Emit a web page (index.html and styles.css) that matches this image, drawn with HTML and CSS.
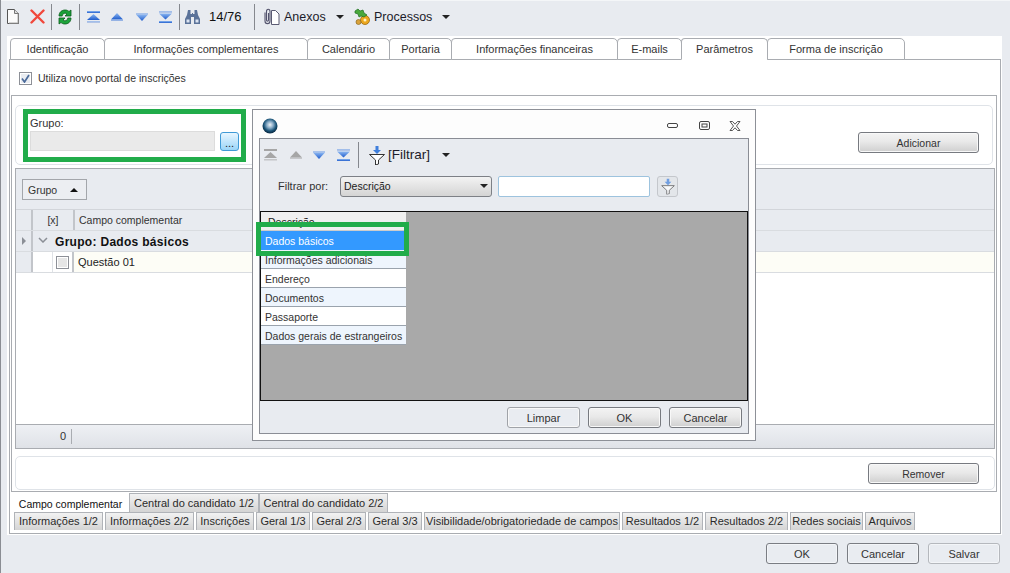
FILE: index.html
```html
<!DOCTYPE html>
<html lang="pt">
<head>
<meta charset="utf-8">
<title>Parâmetros</title>
<link rel="stylesheet" href="styles.css">
</head>
<body>
<svg class="defs" width="0" height="0" aria-hidden="true">
  <defs>
    <linearGradient id="blue" x1="0" y1="0" x2="0" y2="1"><stop offset="0" stop-color="#8db8f2"/><stop offset="1" stop-color="#1f5ccc"/></linearGradient>
    <radialGradient id="orb" cx=".5" cy=".42" r=".55"><stop offset="0" stop-color="#f0f4f8"/><stop offset=".4" stop-color="#86aac6"/><stop offset=".75" stop-color="#1a5478"/><stop offset="1" stop-color="#0b2c46"/></radialGradient>
    <symbol id="nav-first" viewBox="0 0 13 12"><rect x="0" y="0" width="13" height="2"/><path d="M6.500 3 13 9H0z"/><rect x="0" y="10" width="13" height="1.500" opacity=".55"/></symbol>
    <symbol id="nav-up" viewBox="0 0 12 8"><path d="M6 0 12 6.500H0z"/><rect y="6.500" width="12" height="1.500" opacity=".5"/></symbol>
    <symbol id="nav-down" viewBox="0 0 12 8"><rect width="12" height="1.500" opacity=".5"/><path d="M0 1.500H12L6 8z"/></symbol>
    <symbol id="nav-last" viewBox="0 0 13 12"><rect width="13" height="1.500" opacity=".55"/><path d="M0 2.500H13L6.500 8.500z"/><rect y="10" width="13" height="2"/></symbol>
    <symbol id="funnel" viewBox="0 0 16 19"><path d="M6.500 0h3v4h2.500L8 8 4 4h2.500z" fill="#3f7fdc"/><path d="M.5 8.500h15L9.500 14v4l-3 1v-5z" fill="#fff" stroke="#333"/></symbol>
  </defs>
</svg>
<div class="app">
  <header class="toolbar">
    <svg class="ic ic-new" width="12" height="15" viewBox="0 0 12 15"><path d="M.5.5h7l4 4v10H.5z" fill="#fbfbfb" stroke="#555"/><path d="M7.500.5v4h4" fill="#ddd" stroke="#777"/><path d="M11 5v9H2" fill="none" stroke="#aaa"/></svg>
    <svg class="ic ic-del" width="15" height="15" viewBox="0 0 15 15"><path d="M1.500 1.500 13.500 13.500M13.500 1.500 1.500 13.500" stroke="#f0483c" stroke-width="2.400" stroke-linecap="round"/></svg>
    <span class="sep sep-a"></span>
    <svg class="ic ic-ref" width="14" height="16" viewBox="0 0 14 16"><path d="M1 7C1 3 4 1 7 1c2 0 3 .6 4 1.500L13 1v6H7l2-2C8 4 6.500 4 5.500 4.700 4.500 5.400 4.300 6.400 4.300 7z" fill="#18a038" stroke="#0b5c1c" stroke-width=".8"/><path d="M13 9c0 4-3 6-6 6-2 0-3-.6-4-1.500L1 15V9h6l-2 2c1 1 2.500 1 3.500.3 1-.7 1.200-1.700 1.200-2.300z" fill="#1ea53c" stroke="#0b5c1c" stroke-width=".8"/></svg>
    <span class="sep sep-b"></span>
    <svg class="nav nav-w ic-first" width="13" height="12"><use href="#nav-first"/></svg>
    <svg class="nav nav-w ic-up" width="12" height="8"><use href="#nav-up"/></svg>
    <svg class="nav nav-w ic-down" width="12" height="8"><use href="#nav-down"/></svg>
    <svg class="nav nav-w ic-last" width="13" height="12"><use href="#nav-last"/></svg>
    <span class="sep sep-c"></span>
    <svg class="ic ic-bin" width="15" height="15" viewBox="0 0 15 15"><path d="M3 1h2.500v4H7v-1h1v1h1.500V1H12l1 5 2 4v5H9V8H6v7H0v-5l2-4z" fill="#5a7299"/><path d="M1.500 10.500h3v3h-3zM10.500 10.500h3v3h-3z" fill="#dbe4f2"/></svg>
    <span class="count">14/76</span>
    <span class="sep sep-d"></span>
    <svg class="ic ic-clip" width="17" height="18" viewBox="0 0 17 18"><path d="M8.500 2.500h4l3.500 3.500v10.500H8.500z" fill="#fff" stroke="#5a5a72"/><path d="M2 4.500V13c0 3.500 5 3.500 5 0V3.500C7 .5 3.500.5 3.500 3.500V12c0 1.500 2 1.500 2 0V5" fill="none" stroke="#54546e" stroke-width="1.100"/></svg>
    <span class="tool-label lab-anexos">Anexos</span>
    <span class="caret caret-anexos"></span>
    <svg class="ic ic-proc" width="17" height="18" viewBox="0 0 17 18"><circle cx="11" cy="12" r="4.500" fill="#eda81e" stroke="#9c6a10" stroke-width=".8"/><circle cx="11" cy="12" r="1.500" fill="#fff2c0"/><path d="M1 3l3-2 2 2 3-1 1 3 3 2-3 2-3-1-2 1-1-3-3-1z" fill="#49a83c" stroke="#1f6e22" stroke-width=".7"/><circle cx="4.500" cy="14" r="2.500" fill="#d9a23a" stroke="#8c6a20" stroke-width=".7"/></svg>
    <span class="tool-label lab-proc">Processos</span>
    <span class="caret caret-proc"></span>
  </header>

  <main class="sheet">
    <nav class="top-tabs">
      <span class="top-tab">Identificação</span>
      <span class="top-tab">Informações complementares</span>
      <span class="top-tab">Calendário</span>
      <span class="top-tab">Portaria</span>
      <span class="top-tab">Informações financeiras</span>
      <span class="top-tab">E-mails</span>
      <span class="top-tab top-tab-on">Parâmetros</span>
      <span class="top-tab">Forma de inscrição</span>
    </nav>
    <section class="frame">
      <label class="portal-row"><span class="check check-on"><svg width="9" height="9" viewBox="0 0 9 9"><path d="M1 4.500 3.500 8 8 1" fill="none" stroke="#4a6a9a" stroke-width="1.700"/></svg></span>Utiliza novo portal de inscrições</label>
      <div class="inner">
        <div class="box box-group">
          <div class="field">
            <span class="field-label">Grupo:</span>
            <div class="field-row">
              <span class="field-input"></span>
              <span class="dots">...</span>
            </div>
          </div>
          <button class="btn btn-add">Adicionar</button>
        </div>
        <div class="grid">
          <div class="group-panel"><span class="group-chip">Grupo<i class="caret-up"></i></span></div>
          <div class="grid-row grid-head">
            <span class="cell c-ind"></span>
            <span class="cell c-x">[x]</span>
            <span class="cell c-main">Campo complementar</span>
          </div>
          <div class="grid-row grid-group">
            <span class="cell c-ind"><i class="tri-right"></i></span>
            <span class="chev"><svg width="10" height="6" viewBox="0 0 10 6"><path d="M1 1 5 5 9 1" fill="none" stroke="#8b8f96" stroke-width="1.500"/></svg></span>
            <strong>Grupo: Dados básicos</strong>
          </div>
          <div class="grid-row grid-item">
            <span class="cell c-ind"></span>
            <span class="c-pad"></span>
            <span class="c-check"><span class="check check-off"></span></span>
            <span class="cell c-main c-value">Questão 01</span>
          </div>
          <div class="grid-space"></div>
          <div class="grid-foot"><span class="foot-count">0</span></div>
        </div>
        <div class="box box-remove"><button class="btn btn-rem">Remover</button></div>
      </div>
      <div class="low-tabs low-one">
        <span class="low-tab low-on">Campo complementar</span>
        <span class="low-tab">Central do candidato 1/2</span>
        <span class="low-tab">Central do candidato 2/2</span>
      </div>
      <div class="low-tabs low-two">
        <span class="low-tab">Informações 1/2</span>
        <span class="low-tab">Informações 2/2</span>
        <span class="low-tab">Inscrições</span>
        <span class="low-tab">Geral 1/3</span>
        <span class="low-tab">Geral 2/3</span>
        <span class="low-tab">Geral 3/3</span>
        <span class="low-tab">Visibilidade/obrigatoriedade de campos</span>
        <span class="low-tab">Resultados 1/2</span>
        <span class="low-tab">Resultados 2/2</span>
        <span class="low-tab">Redes sociais</span>
        <span class="low-tab">Arquivos</span>
      </div>
    </section>
  </main>

  <footer class="actions">
    <button class="btn btn-flat">OK</button>
    <button class="btn btn-flat">Cancelar</button>
    <button class="btn btn-flat btn-off">Salvar</button>
  </footer>
</div>

<div class="mark mark-group"></div>

<aside class="dialog">
  <div class="dialog-title">
    <svg class="orb" width="16" height="16" viewBox="0 0 16 16"><circle cx="8" cy="8" r="7.500" fill="url(#orb)"/></svg>
    <span class="win-btns">
      <svg width="13" height="6" viewBox="0 0 13 6"><rect x=".5" y=".5" width="10" height="4" rx="1.500" fill="none" stroke="#444"/></svg>
      <svg width="11" height="10" viewBox="0 0 11 10"><rect x=".5" y=".5" width="10" height="8" rx="1.500" fill="none" stroke="#444"/><rect x="3" y="3" width="5" height="3" fill="none" stroke="#444"/></svg>
      <svg width="12" height="10" viewBox="0 0 12 10"><path d="M1 .5h2.500L6 3.200 8.500.5H11L7.500 5 11 9.500H8.500L6 6.800 3.500 9.500H1L4.500 5z" fill="#fff" stroke="#444" stroke-width=".9"/></svg>
    </span>
  </div>
  <div class="dialog-body">
    <div class="dialog-tools">
      <svg class="nav nav-g dt-first" width="13" height="12"><use href="#nav-first"/></svg>
      <svg class="nav nav-g dt-up" width="12" height="8"><use href="#nav-up"/></svg>
      <svg class="nav nav-w dt-down" width="12" height="8"><use href="#nav-down"/></svg>
      <svg class="nav nav-w dt-last" width="13" height="12"><use href="#nav-last"/></svg>
      <span class="sep dt-sep"></span>
      <svg class="dt-funnel" width="16" height="19"><use href="#funnel"/></svg>
      <span class="tool-label dt-label">[Filtrar]</span>
      <span class="caret dt-caret"></span>
    </div>
    <div class="filter-row">
      <span class="filter-label">Filtrar por:</span>
      <span class="select">Descrição<i class="caret"></i></span>
      <span class="filter-input"></span>
      <span class="filter-btn"><svg width="16" height="19"><use href="#funnel"/></svg></span>
    </div>
    <div class="list-area">
      <div class="list">
        <div class="list-head">Descrição</div>
        <div class="list-row list-sel">Dados básicos</div>
        <div class="list-row list-alt">Informações adicionais</div>
        <div class="list-row">Endereço</div>
        <div class="list-row list-alt">Documentos</div>
        <div class="list-row">Passaporte</div>
        <div class="list-row list-alt">Dados gerais de estrangeiros</div>
        <div class="mark mark-row"></div>
      </div>
    </div>
    <div class="dialog-actions">
      <button class="btn btn-light">Limpar</button>
      <button class="btn">OK</button>
      <button class="btn">Cancelar</button>
    </div>
  </div>
</aside>
</body>
</html>
```

FILE: styles.css
```css
* { box-sizing: border-box; }
html, body { margin: 0; padding: 0; }
body {
  position: relative;
  width: 1010px;
  height: 573px;
  overflow: hidden;
  background: #e8ebf0;
  color: #2a2a2a;
  font: 10.500px/14px "Liberation Sans", Arial, sans-serif;
}
.defs { position: absolute; }
.app { display: flex; flex-direction: column; height: 573px; border-left: 1px solid #8a8d93; }

/* main toolbar */
.toolbar { display: flex; align-items: center; height: 36px; flex: none; border-top: 1px solid #f4f6f8; padding-bottom: 4px; }
.ic, .nav { flex: none; display: block; }
.nav-w { fill: url(#blue); }
.nav-g { fill: #a6a6a6; }
.ic-new { margin-left: 6px; }
.ic-del { margin-left: 11px; }
.sep { flex: none; width: 1px; height: 26px; background: #85888e; }
.sep-a { margin-left: 6px; }
.ic-ref { margin-left: 6px; }
.sep-b { margin-left: 7px; }
.ic-first { margin-left: 7px; }
.ic-up { margin-left: 11px; }
.ic-down { margin-left: 13px; }
.ic-last { margin-left: 11px; }
.sep-c { margin-left: 7px; }
.ic-bin { margin-left: 5px; }
.count { margin-left: 9px; width: 33px; font-size: 13px; color: #111; }
.sep-d { margin-left: 12px; }
.ic-clip { margin-left: 8px; }
.tool-label { font-size: 12.500px; color: #1c1c2a; }
.lab-anexos { margin-left: 4px; width: 42px; }
.caret { flex: none; width: 0; height: 0; border: 4px solid transparent; border-top: 4px solid #222; border-bottom: 0; }
.caret-anexos { margin-left: 10px; }
.ic-proc { margin-left: 10px; }
.lab-proc { margin-left: 3px; width: 58px; }
.caret-proc { margin-left: 10px; }

/* sheet */
.sheet { flex: none; height: 499px; margin-left: 6px; width: 995px; background: #fff; padding: 2px 0 0 2px; display: flex; flex-direction: column; }
.top-tabs { display: grid; grid-template-columns: 94px 203px 82px 62px 166px 64px 86px 137px; height: 22px; flex: none; padding-left: 1px; position: relative; z-index: 1; }
.top-tab { display: flex; align-items: center; justify-content: center; margin-right: -1px; background: #fff; color: #333; font-size: 11px; border: 1px solid #a9acb1; border-radius: 4px 5px 0 0; }
.top-tab-on { border-bottom-color: #fff; }
.frame { flex: none; width: 992px; height: 475px; border: 1px solid #a9acb1; padding: 1px; display: flex; flex-direction: column; margin-top: -1px; background: #fff; }
.portal-row { display: flex; align-items: center; height: 34px; padding: 0 0 0 8px; gap: 6px; color: #333; flex: none; }
.check { flex: none; display: flex; align-items: center; justify-content: center; width: 13px; height: 13px; border: 1px solid #8d9097; background: #e9ecf1; box-shadow: inset 0 0 0 1px #fff; }
.check-off { background: #e6e6e6; }
.inner { flex: none; width: 986px; height: 397px; border: 1px solid #a9acb1; padding: 9px 3px 0 3px; display: flex; flex-direction: column; }

.box { border: 1px solid #dfe3e8; border-radius: 5px; background: #fff; display: flex; }
.box-group { height: 60px; flex: none; justify-content: space-between; align-items: flex-start; padding: 9px 13px 0 14px; }
.field-label { display: block; height: 15px; color: #333; margin-top: 1px; font-size: 11px; }
.field-row { display: flex; align-items: flex-start; gap: 5px; }
.field-input { display: block; width: 185px; height: 20px; background: #eaeaea; border: 1px solid #dcdcdc; }
.dots { display: flex; align-items: flex-end; justify-content: center; width: 19px; height: 19px; margin-top: 1px; border: 1px solid #3f9ad6; border-radius: 3px; background: linear-gradient(#e8f6ff, #9bd5f8); font-size: 11px; line-height: 13px; color: #222; }
.btn { display: block; flex: none; width: 73px; height: 21px; padding: 0; font: 11px/14px "Liberation Sans", Arial, sans-serif; color: #333; text-align: center; border: 1px solid #777a80; border-radius: 3px; background: linear-gradient(#f3f3f3 0%, #e9e9e9 45%, #cfcfcf 100%); box-shadow: inset 0 0 0 1px #f8f8f8; }
.btn-add { width: 121px; margin-top: 17px; font-size: 10.500px; }

.grid { flex: none; height: 281px; margin-top: 3px; width: 980px; border: 1px solid #a9acb1; display: flex; flex-direction: column; }
.group-panel { height: 41px; flex: none; background: #e8ebf0; padding: 10px 0 0 6px; border-bottom: 1px solid #d2d5da; }
.group-chip { display: flex; align-items: center; justify-content: space-between; width: 65px; height: 21px; padding: 0 8px 0 5px; background: #eceef2; border: 1px solid #a3a6ab; color: #333; }
.caret-up { width: 0; height: 0; border: 4px solid transparent; border-bottom: 4px solid #111; border-top: 0; }
.grid-row { display: flex; align-items: stretch; height: 21px; flex: none; border-bottom: 1px solid #d9dce0; }
.cell { display: flex; align-items: center; }
.c-ind { width: 17px; flex: none; background: #e8ebf0; border-right: 2px solid #c2c5ca; justify-content: center; }
.c-x { width: 42px; justify-content: center; border-right: 2px solid #c2c5ca; }
.c-main { padding-left: 4px; flex: 1; }
.c-value { font-size: 11px; }
.grid-head { background: #e8ebf0; color: #333; }
.grid-group { background: #e8ebf0; align-items: center; color: #111; }
.grid-group .c-ind { align-self: stretch; }
.grid-group strong { margin-left: 7px; font-size: 12px; letter-spacing: .3px; padding-top: 1px; }
.chev { display: block; margin-left: 5px; height: 14px; line-height: 11px; }
.tri-right { width: 0; height: 0; border: 4px solid transparent; border-left: 4px solid #8b8f96; border-right: 0; }
.grid-item { background: #fdfdf6; color: #222; }
.c-pad { width: 20px; flex: none; background: #fff; border-right: 1px solid #dfe2e6; }
.c-check { width: 21px; flex: none; display: flex; align-items: center; justify-content: center; border-right: 2px solid #c2c5ca; background: #fff; }
.grid-space { flex: 1; background: #fff; border-bottom: 1px solid #a9acb1; }
.grid-foot { height: 23px; flex: none; display: flex; align-items: center; background: linear-gradient(#eef0f4, #dfe2e7); }
.foot-count { width: 56px; padding: 0 5px 0 0; height: 15px; text-align: right; border-right: 1px solid #a9acb1; color: #333; font-size: 11px; }
.box-remove { height: 34px; flex: none; margin-top: 7px; width: 980px; justify-content: flex-end; padding: 6px 15px 0 0; }
.btn-rem { width: 111px; font-size: 10.500px; }

/* lower tabs */
.low-tabs { display: grid; flex: none; }
.low-one { height: 20px; grid-template-columns: 117px 130px 129px; margin: 0 0 0 1px; }
.low-two { height: 18px; margin-left: 3px; grid-template-columns: 91px 91px 60px 56px 56px 56px 198px 83px 85px 75px 52px; }
.low-tab { display: flex; align-items: center; justify-content: center; color: #2a2a2a; font-size: 11px; background: linear-gradient(#f2f2f2, #d4d4d4); border: 1px solid #b0b3b8; border-bottom: 0; white-space: nowrap; }
.low-two .low-tab { padding-bottom: 2px; margin-right: 2px; }
.low-one .low-tab { margin-top: 1px; }
.low-one .low-on { margin-top: 0; padding-top: 3px; font-size: 10.500px; background: #fff; border: 0; color: #111; }

/* footer */
.actions { flex: none; display: flex; justify-content: flex-end; gap: 9px; padding: 8px 10px 0 0; }
.actions .btn { width: 72px; }
.btn-flat { background: #e9ecf1; border-color: #7a7d83; box-shadow: inset 0 0 0 1px #f3f5f8; }
.btn-off { border-color: #b5b8bd; }
.btn-light { background: #e9ecf1; border-color: #a0a3a8; }

/* overlay markers */
.mark { position: absolute; border: 5px solid #21ac4a; pointer-events: none; }
.mark-group { left: 23px; top: 109px; width: 223px; height: 53px; }
.mark-row { left: -5px; top: 10px; width: 153px; height: 34px; }

/* dialog */
.dialog { position: absolute; left: 252px; top: 109px; width: 504px; height: 332px; background: #fdfdfd; border: 1px solid #8d9097; padding: 0 6px 6px 6px; display: flex; flex-direction: column; }
.dialog-title { height: 28px; flex: none; display: flex; align-items: center; justify-content: space-between; padding: 4px 8px 0 3px; }
.orb { display: block; }
.win-btns { display: flex; align-items: center; gap: 19px; }
.dialog-body { flex: 1; background: #e8ebf0; border: 1px solid #8a8d95; display: flex; flex-direction: column; }
.dialog-tools { display: flex; align-items: center; height: 31px; flex: none; padding-top: 1px; }
.dt-first { margin-left: 4px; }
.dt-up { margin-left: 13px; }
.dt-down { margin-left: 11px; }
.dt-last { margin-left: 12px; }
.dt-sep { margin-left: 8px; }
.dt-funnel { margin-left: 10px; display: block; flex: none; }
.dt-label { margin-left: 3px; width: 44px; font-size: 13.500px; }
.dt-caret { margin-left: 10px; }
.filter-row { display: flex; align-items: center; height: 22px; margin-top: 5px; flex: none; padding-left: 18px; color: #333; }
.filter-label { width: 62px; flex: none; font-size: 11px; }
.select { display: flex; align-items: center; justify-content: space-between; width: 152px; height: 21px; padding: 0 3px 0 3px; border: 1px solid #7d8086; border-radius: 3px; background: linear-gradient(#f3f3f3, #d4d4d4); color: #1c1c1c; }
.filter-input { width: 152px; height: 21px; margin-left: 6px; background: #fff; border: 1px solid #9dc3de; border-radius: 2px; }
.filter-btn { display: flex; align-items: center; justify-content: center; width: 21px; height: 21px; margin-left: 7px; background: #e2e4e8; border: 1px solid #b5b8bd; border-radius: 3px; opacity: .7; }
.filter-btn svg { transform: scale(.85); }
.list-area { flex: none; height: 190px; margin: 14px 0 0 0; background: #a9a9a9; border: 1px solid #111; }
.list { position: relative; width: 145px; background: #fff; }
.list-head { height: 19px; padding: 3px 0 0 7px; background: #f0f0f0; border-bottom: 1px solid #ccc; color: #222; }
.list-row { display: block; height: 19px; padding: 3px 0 0 4px; background: #fff; border-bottom: 1px solid #9aa3ad; color: #333; white-space: nowrap; }
.list-alt { background: #eef5fd; }
.list-sel { background: #3399ff; color: #fff; border-bottom: 0; }
.dialog-actions { display: flex; justify-content: flex-end; gap: 8px; padding: 6px 6px 0 0; }
```
